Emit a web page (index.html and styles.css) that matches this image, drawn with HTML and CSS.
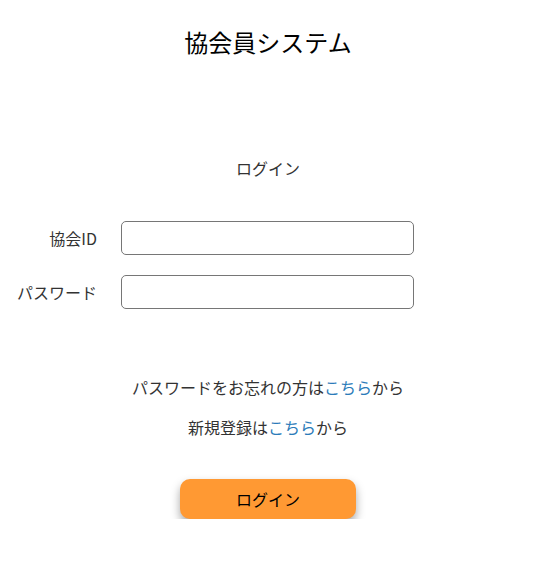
FILE: index.html
```html
<!DOCTYPE html>
<html lang="ja">
<head>
    <meta charset="UTF-8">
    <meta name="viewport" content="width=device-width, initial-scale=1.0">
    <title>協会員システム</title>
    <link rel="stylesheet" href="styles.css">
</head>
<body>

    <h1 class="site-title">協会員システム</h1>

    <div class="login-section">
        <div class="login-heading">ログイン</div>

        <form class="login-form">
            <div class="form-row">
                <label for="member-id">協会ID</label>
                <input type="text" id="member-id">
            </div>
            <div class="form-row">
                <label for="password">パスワード</label>
                <input type="password" id="password">
            </div>
        </form>

        <div class="login-links">
            <p>パスワードをお忘れの方は<a href="#">こちら</a>から</p>
            <p>新規登録は<a href="#">こちら</a>から</p>
        </div>

        <div class="login-actions">
            <button type="button" class="login-button">ログイン</button>
        </div>
    </div>

</body>
</html>
```

FILE: styles.css
```css
body {
    font-family: "Noto Sans CJK JP", "Noto Sans", sans-serif;
    margin: 0;
    padding: 0 8px 0 0;
    background-color: #fff;
    color: #333;
}

.site-title {
    margin: 24px 0 0;
    font-size: 24px;
    font-weight: normal;
    line-height: 36px;
    text-align: center;
    color: #000;
}

/* Login block */
.login-heading {
    margin-top: 96px;
    font-size: 16px;
    line-height: 24px;
    text-align: center;
}

.login-form {
    display: flex;
    flex-direction: column;
    gap: 20px;
    margin-top: 41px;
}

.form-row {
    display: grid;
    grid-template-columns: 97px 293px;
    column-gap: 24px;
    align-items: center;
}

.form-row label {
    text-align: right;
    font-size: 16px;
    line-height: 24px;
}

.form-row input {
    box-sizing: border-box;
    height: 34px;
    border: 1px solid #767676;
    border-radius: 5px;
    padding: 4px 8px;
    font-size: 16px;
}

.login-links {
    margin-top: 66px;
    text-align: center;
}

.login-links p {
    margin: 0 0 16px;
    font-size: 16px;
    line-height: 24px;
}

.login-links a {
    color: #2b7bb9;
    text-decoration: none;
}

.login-actions {
    display: flex;
    justify-content: center;
    margin-top: 40px;
}

.login-button {
    width: 176px;
    height: 40px;
    border: none;
    border-radius: 10px;
    background-color: #ff9933;
    color: #000;
    font-family: inherit;
    font-size: 16px;
    box-shadow: 0 5px 10px rgba(0, 0, 0, 0.35);
}
```
